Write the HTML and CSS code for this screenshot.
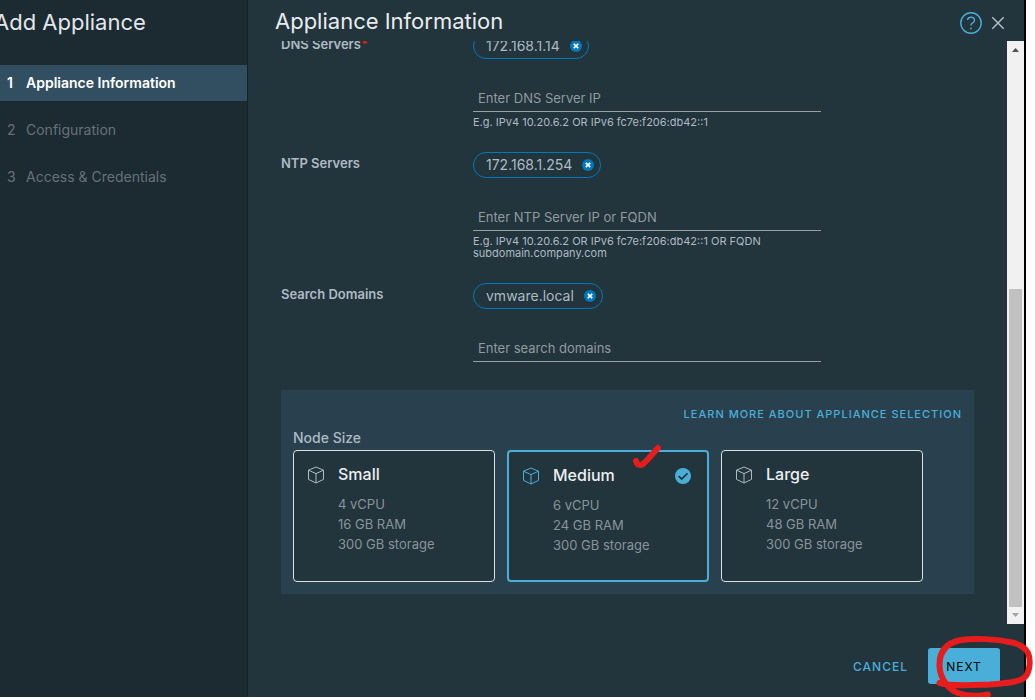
FILE: index.html
```html
<!DOCTYPE html>
<html lang="en">
<head>
<meta charset="utf-8">
<title>Add Appliance</title>
<link rel="stylesheet" href="styles.css">
</head>
<body>
<div class="wizard">
  <nav class="sidebar">
    <h1 class="wizard-title">Add Appliance</h1>
    <ol class="steps">
      <li><button class="step active" type="button"><span class="num">1</span>Appliance Information</button></li>
      <li><button class="step" type="button"><span class="num">2</span>Configuration</button></li>
      <li><button class="step" type="button"><span class="num">3</span>Access &amp; Credentials</button></li>
    </ol>
  </nav>
  <main class="page">
    <header class="page-head">
      <h2 class="page-title">Appliance Information</h2>
      <button class="icon-btn" type="button" aria-label="Help">
        <svg width="24" height="24" viewBox="0 0 24 24" fill="none" stroke="#49afd9" stroke-width="1.4"><circle cx="12" cy="12" r="10.2"/><path d="M8.500 9C8.800 7.200 10 6.300 12 6.300c2.100 0 3.500 1.100 3.500 2.900 0 1.700-1.200 2.400-2.200 3-.9.5-1.300 1-1.300 2.300"/><path d="M12 16.700v1.600" stroke-width="1.700"/></svg>
      </button>
      <button class="icon-btn" type="button" aria-label="Close">
        <svg width="14" height="14" viewBox="0 0 14 14" stroke="#b6c3c9" stroke-width="1.400"><path d="M1.300 1.300l11.400 11.400M12.700 1.300L1.300 12.700"/></svg>
      </button>
    </header>
    <div class="scroll">
      <form class="content" id="appliance">
        <div class="field">
          <label class="label" for="dns">DNS Servers<span class="req">*</span></label>
          <div class="control">
            <span class="chip">172.168.1.14<button class="chip-x" type="button" aria-label="Remove 172.168.1.14"><svg width="12" height="12" viewBox="0 0 12 12"><circle cx="6" cy="6" r="6" fill="#0079b8"/><path d="M3.800 3.800l4.400 4.400M8.200 3.800L3.800 8.200" stroke="#fff" stroke-width="1.700"/></svg></button></span>
            <input class="text" id="dns" type="text" placeholder="Enter DNS Server IP">
            <p class="hint">E.g. IPv4 10.20.6.2 OR IPv6 fc7e:f206:db42::1</p>
          </div>
        </div>
        <div class="field">
          <label class="label" for="ntp">NTP Servers</label>
          <div class="control">
            <span class="chip">172.168.1.254<button class="chip-x" type="button" aria-label="Remove 172.168.1.254"><svg width="12" height="12" viewBox="0 0 12 12"><circle cx="6" cy="6" r="6" fill="#0079b8"/><path d="M3.800 3.800l4.400 4.400M8.200 3.800L3.800 8.200" stroke="#fff" stroke-width="1.700"/></svg></button></span>
            <input class="text" id="ntp" type="text" placeholder="Enter NTP Server IP or FQDN">
            <p class="hint">E.g. IPv4 10.20.6.2 OR IPv6 fc7e:f206:db42::1 OR FQDN<br>subdomain.company.com</p>
          </div>
        </div>
        <div class="field">
          <label class="label" for="search">Search Domains</label>
          <div class="control">
            <span class="chip">vmware.local<button class="chip-x" type="button" aria-label="Remove vmware.local"><svg width="12" height="12" viewBox="0 0 12 12"><circle cx="6" cy="6" r="6" fill="#0079b8"/><path d="M3.800 3.800l4.400 4.400M8.200 3.800L3.800 8.200" stroke="#fff" stroke-width="1.700"/></svg></button></span>
            <input class="text" id="search" type="text" placeholder="Enter search domains">
          </div>
        </div>
        <fieldset class="sizes">
          <a class="learn" href="#">Learn more about appliance selection</a>
          <div class="sizes-title" id="node-size">Node Size</div>
          <div class="cards" role="radiogroup" aria-labelledby="node-size">
            <label class="card">
              <input class="pick" type="radio" name="size">
              <svg class="cube" width="18" height="18" viewBox="0 0 18 18"><path d="M9 1l7.500 3.200v9.200L9 17l-7.500-3.600V4.200zM1.500 4.200L9 7.600l7.500-3.400M9 7.600V17"/></svg>
              <span class="info"><span class="name">Small</span><span class="spec">4 vCPU</span><span class="spec">16 GB RAM</span><span class="spec">300 GB storage</span></span>
            </label>
            <label class="card selected">
              <input class="pick" type="radio" name="size" checked>
              <svg class="cube" width="18" height="18" viewBox="0 0 18 18"><path d="M9 1l7.500 3.200v9.200L9 17l-7.500-3.600V4.200zM1.500 4.200L9 7.600l7.500-3.400M9 7.600V17"/></svg>
              <span class="info"><span class="name">Medium</span><span class="spec">6 vCPU</span><span class="spec">24 GB RAM</span><span class="spec">300 GB storage</span></span>
              <svg class="tick" width="16" height="16" viewBox="0 0 16 16"><circle cx="8" cy="8" r="8" fill="#49afd9"/><path d="M3.700 8.100l3 3 5.700-5.700" fill="none" stroke="#22343c" stroke-width="1.800"/></svg>
              <svg class="mark-tick" width="30" height="26" viewBox="0 0 30 26"><path d="M4 17C5 21 8 22 11 20C16 16 21 9 26 4" /></svg>
            </label>
            <label class="card">
              <input class="pick" type="radio" name="size">
              <svg class="cube" width="18" height="18" viewBox="0 0 18 18"><path d="M9 1l7.500 3.200v9.200L9 17l-7.500-3.600V4.200zM1.500 4.200L9 7.600l7.500-3.400M9 7.600V17"/></svg>
              <span class="info"><span class="name">Large</span><span class="spec">12 vCPU</span><span class="spec">48 GB RAM</span><span class="spec">300 GB storage</span></span>
            </label>
          </div>
        </fieldset>
      </form>
      <div class="bar" aria-hidden="true">
        <svg width="17" height="17" viewBox="0 0 17 17"><path d="M5 11h7L8.500 7z" fill="#505050"/></svg>
        <div class="track"><div class="thumb"></div></div>
        <svg width="17" height="17" viewBox="0 0 17 17"><path d="M5 6h7l-3.500 4z" fill="#a3a3a3"/></svg>
      </div>
    </div>
    <footer class="foot">
      <button class="btn" type="button">Cancel</button>
      <div class="next-wrap">
        <button class="btn primary" type="submit" form="appliance">Next</button>
        <svg class="mark-ring" width="107" height="68" viewBox="928 632 107 68"><path d="M939.500 683C954 687 975 685 990 684.500C1008 683 1018 682 1024 678C1030 673 1031 660 1028 653C1024 645 1016 643 1009 642C996 639 975 638 961 640C946 643 939 652 939.500 666C940 679 949 690 958 693C970 697 980 696 988 694.500"/></svg>
      </div>
    </footer>
  </main>
</div>
</body>
</html>
```
FILE: styles.css
```css
* { box-sizing: border-box; }
body {
  margin: 0;
  background: #fff;
  color: #adbbc4;
  font: 14px/20px Inter, "Open Sans", sans-serif;
  overflow: hidden;
}
button { font: inherit; color: inherit; border: 0; padding: 0; background: none; cursor: pointer; }
h1, h2, p, ol { margin: 0; padding: 0; font-weight: 400; }
.wizard {
  display: flex;
  height: calc(100vh - 3px);
  margin-right: 9px;
  border-right: 2px solid #000;
  background: #22343c;
}
.sidebar {
  flex: 0 0 248px;
  background: #1c2a32;
  border-right: 1px solid #15222a;
  overflow: hidden;
}
.wizard-title {
  margin: 6px 0 27px -6px;
  font-size: 22px;
  line-height: 32px;
  color: #e2e7ea;
}
.steps { list-style: none; display: grid; gap: 11px; }
.step {
  display: flex;
  align-items: center;
  width: 100%;
  height: 36px;
  padding-left: 7px;
  text-align: left;
  color: #667279;
}
.step.active { background: #324f62; color: #fff; font-weight: 600; }
.num { width: 19px; }
.page { flex: 1; min-width: 0; display: flex; flex-direction: column; }
.page-head {
  display: flex;
  align-items: center;
  gap: 8px;
  height: 41px;
  padding: 4px 19px 0 27px;
}
.page-title { flex: 1; padding-bottom: 4px; font-size: 22px; line-height: 32px; color: #e9ecef; }
.icon-btn { display: flex; }
.scroll { flex: 1; min-height: 0; display: flex; overflow: hidden; }
.content {
  flex: 1;
  min-width: 0;
  display: flex;
  flex-direction: column;
  justify-content: flex-end;
  padding: 0 33px 30px;
}
.field {
  display: grid;
  grid-template-columns: 192px minmax(0, 348px);
  margin-bottom: 24px;
}
.label { font-size: 13px; line-height: 22px; font-weight: 600; }
.req { color: #e12200; }
.control { display: flex; flex-direction: column; align-items: flex-start; }
.chip {
  display: flex;
  align-items: center;
  gap: 10px;
  height: 26px;
  padding: 0 6px 0 12px;
  border: 1px solid #0079b8;
  border-radius: 13px;
  font-size: 14px;
}
.chip-x { display: flex; }
.text {
  width: 100%;
  height: 24px;
  margin-top: 29px;
  padding: 0 5px 3px;
  border: 0;
  border-bottom: 1px solid #98a0a4;
  background: none;
  color: #adbbc4;
  font: 13px Inter, "Open Sans", sans-serif;
  outline: 0;
}
.text::placeholder { color: #919b9f; opacity: 1; }
.hint { margin-top: 4px; font-size: 11px; line-height: 12px; }
.sizes {
  min-width: 0;
  margin: 4px 0 0;
  padding: 12px;
  border: 0;
  background: #29404e;
  display: flex;
  flex-direction: column;
}
.learn {
  align-self: flex-end;
  font-size: 11px;
  line-height: 24px;
  font-weight: 500;
  letter-spacing: 1px;
  text-transform: uppercase;
  text-decoration: none;
  color: #49afd9;
}
.sizes-title { line-height: 24px; font-weight: 500; }
.cards { display: flex; gap: 12px; }
.card {
  position: relative;
  flex: 0 1 202px;
  display: flex;
  gap: 13px;
  height: 132px;
  padding: 11px 16px 0 13px;
  border: 1px solid #dcdfe0;
  border-radius: 4px;
  background: #22343c;
}
.card.selected { border: 2px solid #49afd9; }
.pick { position: absolute; inset: 0; width: 100%; height: 100%; margin: 0; opacity: 0; cursor: pointer; }
.cube { margin-top: 4px; fill: none; stroke: #adbbc4; stroke-width: 1; stroke-linejoin: round; }
.selected .cube { stroke: #49afd9; }
.info { flex: 1; display: flex; flex-direction: column; font-size: 13px; color: #87959b; }
.name { margin-bottom: 8px; font-size: 16px; line-height: 24px; font-weight: 500; color: #eceff1; }
.tick { margin-top: 5px; }
.mark-tick, .mark-ring { position: absolute; fill: none; stroke: #e71d1d; stroke-width: 6; stroke-linecap: round; stroke-linejoin: round; pointer-events: none; }
.mark-tick { left: 123px; top: -8px; }
.bar { width: 17px; display: flex; flex-direction: column; background: #f1f1f1; }
.track { flex: 1; display: flex; flex-direction: column; justify-content: flex-end; padding: 0 2px; }
.thumb { height: 58%; background: #c1c1c1; }
.foot { display: flex; justify-content: flex-end; gap: 8px; padding: 24px 24px 13px; }
.btn {
  height: 36px;
  padding: 2px 12px 0;
  border-radius: 3px;
  font-size: 12px;
  font-weight: 500;
  letter-spacing: 1px;
  text-transform: uppercase;
  color: #49afd9;
}
.primary { width: 72px; background: #49afd9; color: #000; font-weight: 400; }
.next-wrap { position: relative; }
.mark-ring { left: 0; top: -16px; }
```
